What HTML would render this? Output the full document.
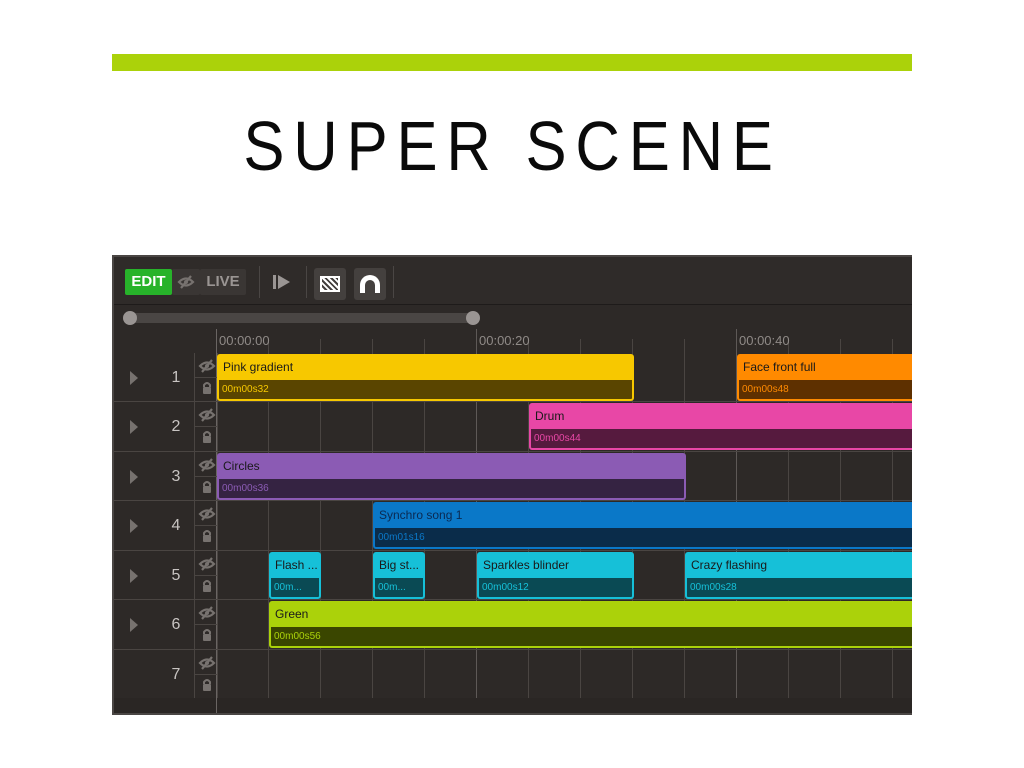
<!DOCTYPE html>
<html><head><meta charset="utf-8"><style>
*{margin:0;padding:0;box-sizing:border-box}
body{width:1024px;height:768px;background:#fff;position:relative;overflow:hidden;font-family:"Liberation Sans",sans-serif}
.a{position:absolute}
.bar{left:112px;top:54px;width:800px;height:17px;background:#abd20a}
.title{left:0;width:1024px;top:111px;text-align:center;font-size:70px;line-height:70px;color:#0a0a0a;letter-spacing:10px;transform:scaleX(0.88);transform-origin:517px 0}
.panel{left:112px;top:255px;width:800px;height:460px;background:#2d2927;border:2px solid #4a4644;border-right:none;overflow:hidden}
.tb{left:0;top:0;width:800px;height:48px;background:#2f2b29;border-bottom:1px solid #1e1b1a}
.btn{font-weight:bold;font-size:15px;color:#fff;text-align:center;line-height:26px;height:26px;top:12px;border-radius:2px}
.vl{width:1px;height:32px;top:9px;background:#4a4644}
.track{left:14px;top:56px;width:346px;height:10px;background:#4a4644;border-radius:5px}
.knob{width:14px;height:14px;border-radius:7px;background:#9a9593;top:54px}
.rl{color:#8f8a87;font-size:13px;top:76px}
.vg{width:1px;background:#4a4542}
.hg{height:1px;background:#4a4542;left:0;width:800px}
.clip{border:2px solid;border-radius:3px;overflow:hidden;height:47px}
.clip .t{height:24px;font-size:12px;line-height:22px;padding-left:4px;color:#1a1a1a;white-space:nowrap}
.clip .b{height:21px;font-size:10px;line-height:19px;padding-left:3px;white-space:nowrap}
.num{color:#c8c4c2;font-size:16px;width:20px;text-align:center;left:52px}
.tri{width:0;height:0;border-left:8px solid #77726f;border-top:7px solid transparent;border-bottom:7px solid transparent;left:16px}
.ic{left:84px;width:18px;height:16px}
</style></head><body>
<svg width="0" height="0" style="position:absolute">
<symbol id="eye" viewBox="0 0 18 14"><path d="M2 7 Q9 0 16 7 Q9 14 2 7Z" fill="none" stroke="#77726f" stroke-width="2.2"/><circle cx="9" cy="7" r="2" fill="#77726f"/><path d="M4 13 L14 1" stroke="#77726f" stroke-width="2.2"/></symbol>
<symbol id="lock" viewBox="0 0 18 14"><path d="M6 6 V4 Q9 0 12 4 V6" fill="none" stroke="#77726f" stroke-width="2"/><rect x="5" y="6" width="8" height="7" rx="1" fill="#77726f"/></symbol>
</svg>
<div class="a bar"></div>
<div class="a title">SUPER SCENE</div>
<div class="a panel">
 <div class="a tb"></div>
 <div class="a btn" style="left:11px;width:47px;background:#27b32a">EDIT</div>
 <div class="a btn" style="left:58px;width:28px;background:#3a3634"><svg class="a" style="left:5px;top:5px" width="18" height="16"><use href="#eye"/></svg></div>
 <div class="a btn" style="left:86px;width:46px;background:#3a3634;color:#9a9593">LIVE</div>
 <div class="a vl" style="left:145px"></div>
 <div class="a" style="left:159px;top:18px;width:3px;height:14px;background:#9a9593"></div>
 <div class="a" style="left:164px;top:18px;width:0;height:0;border-left:12px solid #9a9593;border-top:7px solid transparent;border-bottom:7px solid transparent"></div>
 <div class="a vl" style="left:192px"></div>
 <div class="a" style="left:200px;top:11px;width:32px;height:32px;background:#44403e;border-radius:3px"></div>
 <div class="a" style="left:206px;top:19px;width:20px;height:16px;border:2px solid #fff;background:repeating-linear-gradient(45deg,#fff 0 2px,#44403e 2px 4px)"></div>
 <div class="a" style="left:240px;top:11px;width:32px;height:32px;background:#44403e;border-radius:3px"></div>
 <div class="a" style="left:246px;top:18px;width:20px;height:18px;border:5px solid #fff;border-bottom:none;border-radius:10px 10px 0 0"></div>
 <div class="a" style="left:246px;top:31px;width:5px;height:5px;background:#fff"></div>
 <div class="a" style="left:261px;top:31px;width:5px;height:5px;background:#fff"></div>
 <div class="a vl" style="left:279px"></div>
 <div class="a track"></div>
 <div class="a knob" style="left:9px"></div>
 <div class="a knob" style="left:352px"></div>
 <div class="a" style="left:80px;top:96px;width:24px;height:346px;border-left:1px solid #4a4542;border-right:1px solid #4a4542"></div>
 <div class="a vg" style="left:102px;top:72px;height:388px;background:#6a6563"></div>
 <div class="a vg" style="left:154px;top:82px;height:378px"></div>
 <div class="a vg" style="left:206px;top:82px;height:378px"></div>
 <div class="a vg" style="left:258px;top:82px;height:378px"></div>
 <div class="a vg" style="left:310px;top:82px;height:378px"></div>
 <div class="a vg" style="left:362px;top:72px;height:388px;background:#5e5957"></div>
 <div class="a vg" style="left:414px;top:82px;height:378px"></div>
 <div class="a vg" style="left:466px;top:82px;height:378px"></div>
 <div class="a vg" style="left:518px;top:82px;height:378px"></div>
 <div class="a vg" style="left:570px;top:82px;height:378px"></div>
 <div class="a vg" style="left:622px;top:72px;height:388px;background:#5e5957"></div>
 <div class="a vg" style="left:674px;top:82px;height:378px"></div>
 <div class="a vg" style="left:726px;top:82px;height:378px"></div>
 <div class="a vg" style="left:778px;top:82px;height:378px"></div>
 <div class="a rl" style="left:105px">00:00:00</div>
 <div class="a rl" style="left:365px">00:00:20</div>
 <div class="a rl" style="left:625px">00:00:40</div>
 <div class="a hg" style="top:144px"></div>
 <div class="a hg" style="top:194px"></div>
 <div class="a hg" style="top:243px"></div>
 <div class="a hg" style="top:293px"></div>
 <div class="a hg" style="top:342px"></div>
 <div class="a hg" style="top:392px"></div>
 <div class="a hg" style="top:441px"></div>
 <div class="a" style="left:0;top:441px;width:800px;height:19px;background:#2a2624"></div>
 <div class="a vg" style="left:102px;top:441px;height:19px;background:#6a6563"></div>
 <div class="a hg" style="top:120px;left:80px;width:24px"></div>
 <div class="a hg" style="top:169px;left:80px;width:24px"></div>
 <div class="a hg" style="top:219px;left:80px;width:24px"></div>
 <div class="a hg" style="top:268px;left:80px;width:24px"></div>
 <div class="a hg" style="top:318px;left:80px;width:24px"></div>
 <div class="a hg" style="top:367px;left:80px;width:24px"></div>
 <div class="a hg" style="top:417px;left:80px;width:24px"></div>
 <div class="a tri" style="top:114px"></div><div class="a num" style="top:112px">1</div>
 <div class="a tri" style="top:163px"></div><div class="a num" style="top:161px">2</div>
 <div class="a tri" style="top:213px"></div><div class="a num" style="top:211px">3</div>
 <div class="a tri" style="top:262px"></div><div class="a num" style="top:260px">4</div>
 <div class="a tri" style="top:312px"></div><div class="a num" style="top:310px">5</div>
 <div class="a tri" style="top:361px"></div><div class="a num" style="top:359px">6</div>
 <div class="a num" style="top:409px">7</div>
 <svg class="a ic" style="top:101px"><use href="#eye"/></svg><svg class="a ic" style="top:123px"><use href="#lock"/></svg>
 <svg class="a ic" style="top:150px"><use href="#eye"/></svg><svg class="a ic" style="top:172px"><use href="#lock"/></svg>
 <svg class="a ic" style="top:200px"><use href="#eye"/></svg><svg class="a ic" style="top:222px"><use href="#lock"/></svg>
 <svg class="a ic" style="top:249px"><use href="#eye"/></svg><svg class="a ic" style="top:271px"><use href="#lock"/></svg>
 <svg class="a ic" style="top:299px"><use href="#eye"/></svg><svg class="a ic" style="top:321px"><use href="#lock"/></svg>
 <svg class="a ic" style="top:348px"><use href="#eye"/></svg><svg class="a ic" style="top:370px"><use href="#lock"/></svg>
 <svg class="a ic" style="top:398px"><use href="#eye"/></svg><svg class="a ic" style="top:420px"><use href="#lock"/></svg>
 <div class="a clip" style="left:103px;top:97px;width:417px;border-color:#f7c800;background:#f7c800"><div class="t">Pink gradient</div><div class="b" style="background:#5a4500;color:#f7c800">00m00s32</div></div>
 <div class="a clip" style="left:623px;top:97px;width:190px;border-color:#ff8a00;background:#ff8a00"><div class="t">Face front full</div><div class="b" style="background:#5e3000;color:#ff8a00">00m00s48</div></div>
 <div class="a clip" style="left:415px;top:146px;width:400px;border-color:#e847a6;background:#e847a6"><div class="t">Drum</div><div class="b" style="background:#561a3e;color:#e847a6">00m00s44</div></div>
 <div class="a clip" style="left:103px;top:196px;width:469px;border-color:#8b5bb4;background:#8b5bb4"><div class="t">Circles</div><div class="b" style="background:#352342;color:#8b5bb4">00m00s36</div></div>
 <div class="a clip" style="left:259px;top:245px;width:556px;border-color:#0a78c8;background:#0a78c8"><div class="t" style="color:#0b2a52">Synchro song 1</div><div class="b" style="background:#0a2c4a;color:#0a78c8">00m01s16</div></div>
 <div class="a clip" style="left:155px;top:295px;width:52px;border-color:#16c0d8;background:#16c0d8"><div class="t">Flash ...</div><div class="b" style="background:#0a4a54;color:#16c0d8">00m...</div></div>
 <div class="a clip" style="left:259px;top:295px;width:52px;border-color:#16c0d8;background:#16c0d8"><div class="t">Big st...</div><div class="b" style="background:#0a4a54;color:#16c0d8">00m...</div></div>
 <div class="a clip" style="left:363px;top:295px;width:157px;border-color:#16c0d8;background:#16c0d8"><div class="t">Sparkles blinder</div><div class="b" style="background:#0a4a54;color:#16c0d8">00m00s12</div></div>
 <div class="a clip" style="left:571px;top:295px;width:240px;border-color:#16c0d8;background:#16c0d8"><div class="t">Crazy flashing</div><div class="b" style="background:#0a4a54;color:#16c0d8">00m00s28</div></div>
 <div class="a clip" style="left:155px;top:344px;width:660px;border-color:#abd20a;background:#abd20a"><div class="t">Green</div><div class="b" style="background:#3a4600;color:#abd20a">00m00s56</div></div>
</div>
</body></html>
